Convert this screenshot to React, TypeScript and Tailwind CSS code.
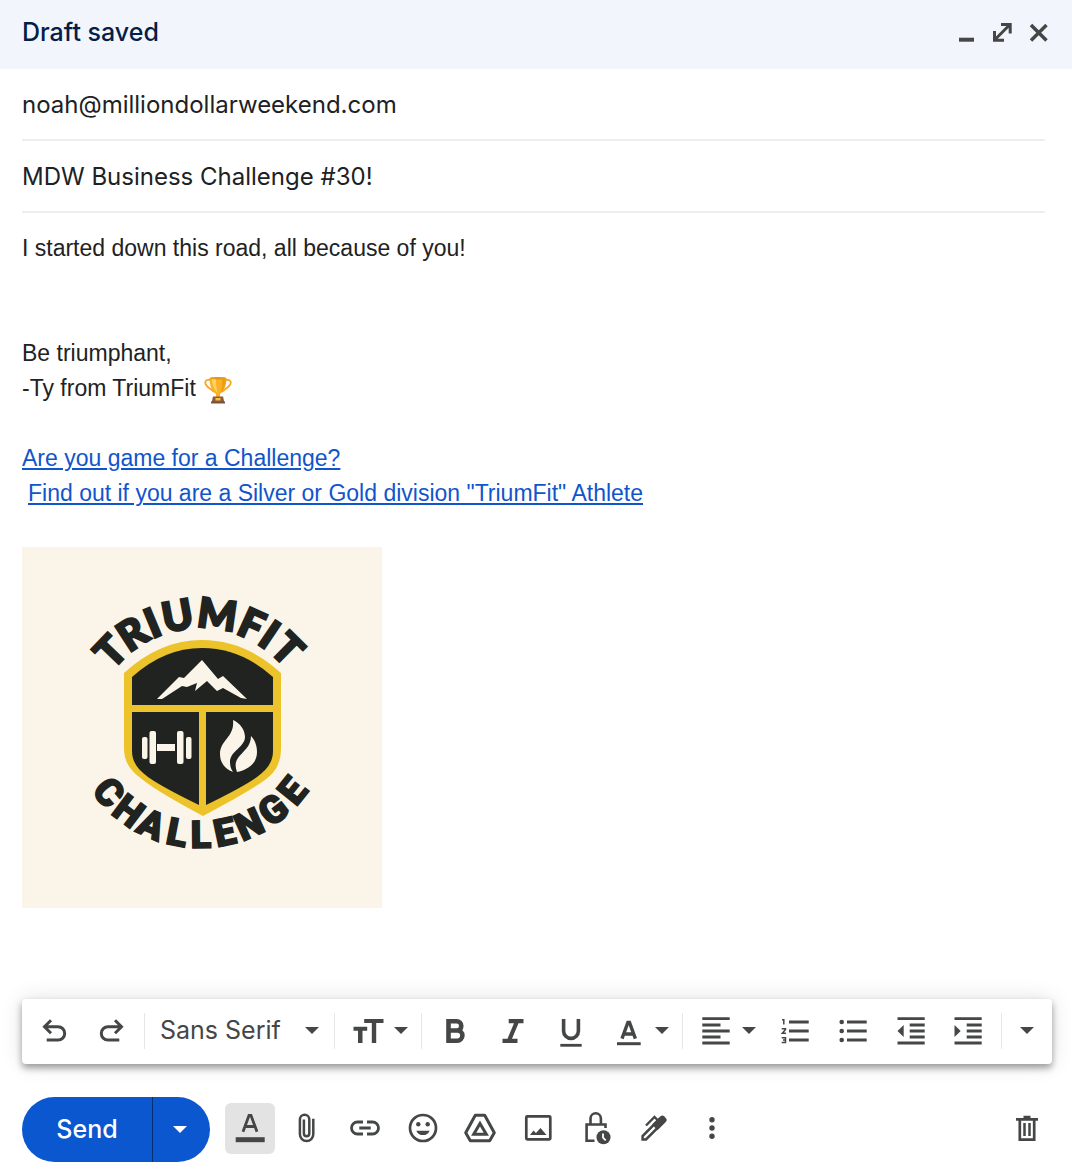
import type { ReactNode } from "react";

function Icon({ children }: { children: ReactNode }) {
  return (
    <svg
      viewBox="0 0 40 40"
      className="size-10 shrink-0"
      fill="none"
      stroke="currentColor"
      strokeWidth="3"
      aria-hidden="true"
    >
      {children}
    </svg>
  );
}

function Caret() {
  return (
    <svg viewBox="0 0 14 7" className="h-[7px] w-3.5 shrink-0" fill="currentColor" aria-hidden="true">
      <path d="M0 0h14L7 7z" />
    </svg>
  );
}

function Separator() {
  return <div className="mx-[3px] h-9 w-px shrink-0 bg-[#e4e7ea]" />;
}

function ToolButton({ label, children }: { label: string; children: ReactNode }) {
  return (
    <button type="button" aria-label={label} className="flex h-12 w-[58px] shrink-0 items-center justify-center">
      {children}
    </button>
  );
}

function MenuButton({ label, children }: { label: string; children: ReactNode }) {
  return (
    <button type="button" aria-label={label} className="flex h-12 w-20 shrink-0 items-center justify-center gap-[5px]">
      {children}
      <Caret />
    </button>
  );
}

function HeaderButton({ label, children }: { label: string; children: ReactNode }) {
  return (
    <button type="button" aria-label={label} className="size-9">
      <svg viewBox="0 0 36 36" className="size-9" fill="none" stroke="currentColor" strokeWidth="3" aria-hidden="true">
        {children}
      </svg>
    </button>
  );
}

function Trophy() {
  return (
    <svg viewBox="0 0 28 28" className="mt-0.5 size-7" role="img" aria-label="trophy">
      <path d="M6 4C1 3 0 7 3 10c2 3 5 3 7 6M22 4c5-1 6 3 3 6-2 3-5 3-7 6" fill="none" stroke="#f5a623" strokeWidth="1.8" />
      <path d="M5.500 2h17c0 7-2 13-6.500 16v3h-4v-3C7.500 15 5.500 9 5.500 2z" fill="#fbb026" />
      <path d="M8 3h4c0 6 .5 10 1.500 14C10 13 8 9 8 3z" fill="#fdd45c" />
      <path d="M18 3h4c-.3 6-2 11-5.500 14C18 12 18.300 8 18 3z" fill="#f09d16" />
      <ellipse cx="14" cy="2.200" rx="8.500" ry="1.300" fill="#e5941a" />
      <path d="M9 20.500h10l1.500 6.500h-13z" fill="#8a5a44" />
      <path d="M11.500 22h5v2.500h-5z" fill="#fbc02d" />
      <path d="M7 25.500h14V27.500H7z" fill="#7d5140" />
    </svg>
  );
}

const topLetters = [
  { char: "T", angle: -46 },
  { char: "R", angle: -33 },
  { char: "I", angle: -22.5 },
  { char: "U", angle: -10.5 },
  { char: "M", angle: 8 },
  { char: "F", angle: 24.5 },
  { char: "I", angle: 34 },
  { char: "T", angle: 44.5 },
];

const bottomLetters = [
  { char: "C", angle: 50 },
  { char: "H", angle: 37 },
  { char: "A", angle: 24 },
  { char: "L", angle: 11 },
  { char: "L", angle: -0.5 },
  { char: "E", angle: -12 },
  { char: "N", angle: -24.5 },
  { char: "G", angle: -38 },
  { char: "E", angle: -51 },
];

function ChallengeLogo() {
  return (
    <svg viewBox="0 0 360 361" className="mt-9 h-[361px] w-[360px]" role="img" aria-label="TriumFit Challenge">
      <path fill="#fbf5e9" d="M0 0h360v361H0z" />
      <g fill="#20231f" stroke="#20231f" strokeWidth="2.4" textAnchor="middle" className="font-['Lato'] text-[41px] font-black">
        {topLetters.map((l, i) => (
          <text key={i} x="178" y="81" transform={`rotate(${l.angle} 178 191)`}>
            {l.char}
          </text>
        ))}
      </g>
      <g fill="#20231f" stroke="#20231f" strokeWidth="1.6" textAnchor="middle" className="font-['Roboto'] text-[38px] font-black">
        {bottomLetters.map((l, i) => (
          <text key={i} x="178" y="301" transform={`rotate(${l.angle} 178 169)`}>
            {l.char}
          </text>
        ))}
      </g>
      <path
        fill="#edc32b"
        d="M102 126Q138 93 180 93Q223 93 259 126V201C259 218 252 227 240 235Q226 245 181 269Q136 245 121 233C109 224 102 216 102 201z"
      />
      <g fill="#20231f">
        <path d="M110 130Q142 101 180 101Q219 101 251 130V158H110z" />
        <path d="M110 165H177V258Q140 240 126 230C115 222 110 214 110 204z" />
        <path d="M184 165H251V204C251 214 246 222 235 230Q221 240 184 258z" />
      </g>
      <g fill="#fbf5e9">
        <path d="M135 152L157 130L162 131L180 113L196 132L201 129L225 152L219 151L201 141L195 144L185 134L173 144L175 136L165 140L160 139L140 152z" />
        <rect x="120" y="190" width="5.500" height="22" rx="2" />
        <rect x="127.500" y="184" width="6.500" height="33" rx="2" />
        <rect x="135" y="197" width="18" height="7" />
        <rect x="155" y="184" width="6.500" height="33" rx="2" />
        <rect x="164" y="190" width="5.500" height="22" rx="2" />
        <path d="M211 173C218 176 223 183 223 190C223 200 208 204 208 215C208 219 209 222 211 225C203 222 198 216 198 207C198 193 213 190 211 173z" />
        <path d="M229 189C233 193 235 199 235 205C235 217 225 223 215 225C213 220 213 215 216 211C221 204 229 200 229 189z" />
      </g>
    </svg>
  );
}

export default function App() {
  return (
    <main className="flex w-full flex-col bg-white font-['Inter',sans-serif] text-[#444746]">
      <header className="flex h-[69px] items-start justify-between bg-[#f2f6fc] pr-[15px] pl-[22px]">
        <h1 className="pt-4 text-[25px] leading-8 font-medium text-[#041e49]">Draft saved</h1>
        <div className="flex pt-4">
          <HeaderButton label="Minimize">
            <path d="M10 23.700H25" strokeWidth="4" />
          </HeaderButton>
          <HeaderButton label="Full screen">
            <path d="M10 23.500L25 8.500M16 8.500H25.200V17.500M9.500 15V24.200H19" />
          </HeaderButton>
          <HeaderButton label="Close">
            <path d="M10 9L25.500 24.500M25.500 9L10 24.500" strokeWidth="3.500" />
          </HeaderButton>
        </div>
      </header>

      <div className="mr-[27px] ml-[22px] text-2xl text-[#202124]">
        <input
          aria-label="To"
          defaultValue="noah@milliondollarweekend.com"
          className="block h-[72px] w-full border-b-2 border-[#eceff1] outline-none"
        />
        <input
          aria-label="Subject"
          defaultValue="MDW Business Challenge #30!"
          className="block h-[72px] w-full border-b-2 border-[#eceff1] outline-none"
        />
      </div>

      <section className="px-[22px] pt-[18px] font-['Liberation_Sans',sans-serif] text-[23px] leading-[35px] text-[#222]">
        <p>I started down this road, all because of you!</p>
        <div className="pt-[70px]">
          <p>Be triumphant,</p>
          <p className="flex items-center gap-2">
            -Ty from TriumFit <Trophy />
          </p>
        </div>
        <div className="pt-[35px] text-[#1155cc] underline">
          <p>
            <a href="#challenge">Are you game for a Challenge?</a>
          </p>
          <p className="pl-1.5">
            <a href="#division">Find out if you are a Silver or Gold division "TriumFit" Athlete</a>
          </p>
        </div>
        <ChallengeLogo />
      </section>

      <div
        role="toolbar"
        aria-label="Formatting options"
        className="mt-[91px] mr-5 ml-[22px] flex h-[65px] items-center rounded-[4px] bg-white pb-0.5 pl-[3px] shadow-[0_4px_7px_rgba(0,0,0,0.36),0_0_22px_rgba(0,0,0,0.12)]"
      >
        <ToolButton label="Undo">
          <Icon>
            <path d="M10 15.700H24a6.700 6.700 0 0 1 0 13.400H12.700M17 9.200L10.500 15.700L17 22.200" />
          </Icon>
        </ToolButton>
        <ToolButton label="Redo">
          <Icon>
            <path d="M30 15.700H16a6.700 6.700 0 0 0 0 13.400H27.300M23 9.200L29.500 15.700L23 22.200" />
          </Icon>
        </ToolButton>
        <Separator />
        <div className="relative flex h-12 w-[183px] shrink-0 items-center">
          <select aria-label="Font" className="h-12 w-full appearance-none bg-transparent pl-3 text-[25px] outline-none">
            <option>Sans Serif</option>
          </select>
          <span className="pointer-events-none absolute right-3">
            <Caret />
          </span>
        </div>
        <Separator />
        <MenuButton label="Size">
          <Icon>
            <path d="M15.200 8H34.500V12H27.200V32H22.800V12H15.200zM4.500 15.700H18.200V19.700H13.500V32H9V19.700H4.500z" fill="currentColor" stroke="none" />
          </Icon>
        </MenuButton>
        <Separator />
        <ToolButton label="Bold">
          <Icon>
            <path d="M14.500 10.300H22.700a4.500 4.500 0 0 1 0 9.200H14.500zM14.500 19.500H23.300a5 5 0 0 1 0 10.200H14.500z" strokeWidth="4.600" />
          </Icon>
        </ToolButton>
        <ToolButton label="Italic">
          <Icon>
            <path d="M16.700 8H31.500V12.300H26.500L20 27.700H25.500V32H10.500V27.700H15.500L22 12.300H16.700z" fill="currentColor" stroke="none" />
          </Icon>
        </ToolButton>
        <ToolButton label="Underline">
          <Icon>
            <path d="M13.600 8V20a7.400 7.400 0 0 0 14.800 0V8" strokeWidth="3.600" />
            <path d="M10.300 34.300H31.700" strokeWidth="2.800" />
          </Icon>
        </ToolButton>
        <MenuButton label="Text color">
          <Icon>
            <path d="M12 27.700L17.900 11.500H19.500L25.400 27.700M14.300 23H23.200" strokeWidth="3.400" />
            <path d="M7 32.700H30.700" />
          </Icon>
        </MenuButton>
        <Separator />
        <MenuButton label="Align">
          <Icon>
            <path d="M5.300 7.700H32.700M5.300 14H23.500M5.300 20H32.700M5.300 26H23.500M5.300 32H32.700" strokeWidth="2.800" />
          </Icon>
        </MenuButton>
        <ToolButton label="Numbered list">
          <Icon>
            <path d="M14 11H33.700M14 20H33.700M14 29H33.700" />
            <path
              d="M7 8.700H8.800V13.500M6.700 17.700H10.500V18.500L7.300 22.300H11M6.700 26.700H10.500V31.500H6.700M8 29.100H10.500"
              strokeWidth="1.500"
            />
          </Icon>
        </ToolButton>
        <ToolButton label="Bulleted list">
          <Icon>
            <path d="M14 11H33.700M14 20H33.700M14 29H33.700" />
            <g fill="currentColor" stroke="none">
              <circle cx="8.700" cy="11" r="2.300" />
              <circle cx="8.700" cy="20" r="2.300" />
              <circle cx="8.700" cy="29" r="2.300" />
            </g>
          </Icon>
        </ToolButton>
        <ToolButton label="Indent less">
          <Icon>
            <path d="M6.500 7.700H33.700M18.700 14H33.700M18.700 20H33.700M18.700 26H33.700M6.500 32H33.700" strokeWidth="2.800" />
            <path d="M12.700 14V26L6.500 20z" fill="currentColor" stroke="none" />
          </Icon>
        </ToolButton>
        <ToolButton label="Indent more">
          <Icon>
            <path d="M5.500 7.700H32.700M17.700 14H32.700M17.700 20H32.700M17.700 26H32.700M5.500 32H32.700" strokeWidth="2.800" />
            <path d="M5.500 14V26L11.700 20z" fill="currentColor" stroke="none" />
          </Icon>
        </ToolButton>
        <Separator />
        <button type="button" aria-label="More formatting options" className="flex h-12 flex-1 items-center justify-center pr-1">
          <Caret />
        </button>
      </div>

      <footer className="mt-[33px] mb-2.5 flex h-[65px] items-center pr-4 pl-[22px]">
        <div className="flex h-[65px] w-[188px] shrink-0 overflow-hidden rounded-full bg-[#0b57d0] text-white">
          <button type="button" className="w-[130px] text-[25px] font-medium">
            Send
          </button>
          <button
            type="button"
            aria-label="More send options"
            className="flex flex-1 items-center justify-center border-l border-[#062e6f] pr-1"
          >
            <Caret />
          </button>
        </div>
        <div className="flex flex-1 items-center pb-0.5">
          <button
            type="button"
            aria-label="Formatting options"
            aria-pressed="true"
            className="mr-[3px] ml-[15px] flex h-[51px] w-[50px] shrink-0 items-center justify-center rounded-md bg-[#e3e3e3]"
          >
            <Icon>
              <path d="M13 22.700L19 6.500H21L27 22.700M15.500 17.500H24.500" strokeWidth="2.800" />
              <path d="M5.700 30.700H34.700" strokeWidth="5" />
            </Icon>
          </button>
          <ToolButton label="Attach files">
            <Icon>
              <path
                d="M26.300 9.700V25.300a6.700 6.700 0 0 1-13.400 0V10.500a4.700 4.700 0 0 1 9.400 0V24.500a2.700 2.700 0 0 1-5.400 0V10.500"
                strokeWidth="2.500"
              />
            </Icon>
          </ToolButton>
          <ToolButton label="Insert link">
            <Icon>
              <path d="M18 13H12.500a6 6 0 0 0 0 12H18M22 13H27.500a6 6 0 0 1 0 12H22M14.300 19H25.700" strokeWidth="2.800" />
            </Icon>
          </ToolButton>
          <ToolButton label="Insert emoji">
            <Icon>
              <circle cx="20" cy="19" r="13" strokeWidth="2.700" />
              <g fill="currentColor" stroke="none">
                <circle cx="15.300" cy="15.300" r="2.200" />
                <circle cx="24.700" cy="15.300" r="2.200" />
                <path d="M13.300 21.700H26.700a7.300 7.300 0 0 1-13.400 0z" />
              </g>
            </Icon>
          </ToolButton>
          <ToolButton label="Insert files using Drive">
            <Icon>
              <path d="M14.300 6.200H23.700L33.300 23.700L28.700 31.700H9.300L4.700 23.700z" strokeLinejoin="round" />
              <path d="M19 14.500L25.300 25.300H12.700z" />
            </Icon>
          </ToolButton>
          <ToolButton label="Insert photo">
            <Icon>
              <rect x="7.300" y="7.300" width="24" height="23" rx="1" strokeWidth="2.700" />
              <path d="M11 26L14.500 21.500L17 24L21.500 19L27.500 26z" fill="currentColor" stroke="none" />
            </Icon>
          </ToolButton>
          <ToolButton label="Confidential mode">
            <Icon>
              <path d="M17.500 31.700H9.600V15.500H28.500V19M13.500 15V9.500a5.200 5.200 0 0 1 10.400 0V15" strokeWidth="2.600" />
              <circle cx="26.500" cy="28.300" r="7" fill="currentColor" stroke="none" />
              <path d="M26 24.500V28.700L28.700 31.300" stroke="white" strokeWidth="1.800" />
            </Icon>
          </ToolButton>
          <ToolButton label="Insert signature">
            <Icon>
              <path d="M7.600 30.400V27L24 10.600L27.500 14L11 30.400z" strokeWidth="2.500" />
              <path d="M17 15.500L25.500 7.300Q27.300 5.500 29.200 7.300L31 9.200Q32.700 11 31 12.800L22.500 21.200z" fill="currentColor" stroke="none" />
              <path d="M11 16.500L19.500 8L23 11.500" strokeWidth="2.400" />
            </Icon>
          </ToolButton>
          <ToolButton label="More options">
            <Icon>
              <g fill="currentColor" stroke="none">
                <circle cx="19" cy="10.700" r="2.700" />
                <circle cx="19" cy="19" r="2.700" />
                <circle cx="19" cy="27.300" r="2.700" />
              </g>
            </Icon>
          </ToolButton>
          <div className="flex flex-1 justify-end">
            <ToolButton label="Discard draft">
              <Icon>
                <path d="M9 10.300H31M16.500 8.200H23.500M12.800 10V30.700H27.200V10" strokeWidth="2.700" />
                <path d="M17.500 14V27M22.500 14V27" strokeWidth="2.500" />
              </Icon>
            </ToolButton>
          </div>
        </div>
      </footer>
    </main>
  );
}
